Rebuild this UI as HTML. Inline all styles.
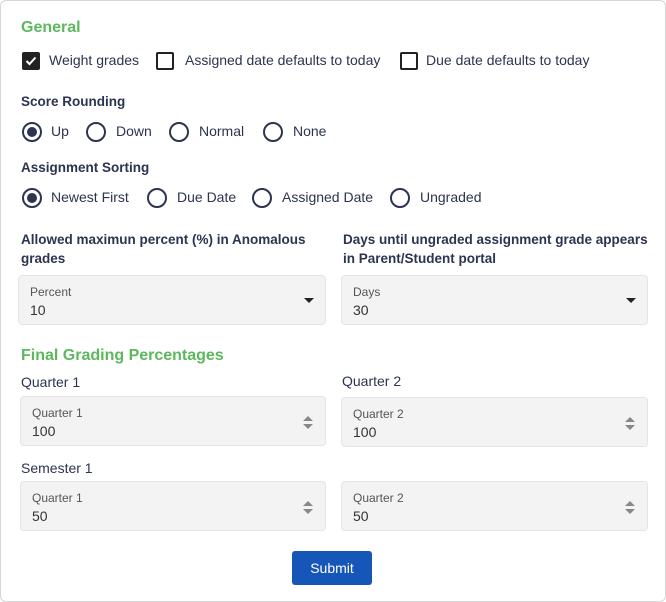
<!DOCTYPE html><html><head><style>
body{margin:0;width:666px;height:602px;background:#fff;font-family:"Liberation Sans",sans-serif;color:#2b3450;position:relative;overflow:hidden}
.card{position:absolute;left:0;top:0;width:664px;height:600px;border:1px solid #d6d6d6;border-radius:6px}
.a{position:absolute;white-space:nowrap}
.g{color:#5cb85c;font-weight:bold;font-size:16px}
.h{font-weight:bold;font-size:13.5px;line-height:19px}
.t{font-size:14px}
.cb{position:absolute;width:14px;height:14px;border:2px solid #222;border-radius:2px}
.rd{position:absolute;width:16px;height:16px;border:2px solid #2b3450;border-radius:50%}
.rd.on::after{content:"";position:absolute;left:3px;top:3px;width:10px;height:10px;border-radius:50%;background:#2b3450}
.box{position:absolute;background:#f3f3f3;border:1px solid #e4e4e4;border-radius:4px}
.lb{position:absolute;left:11px;top:9px;font-size:12px;color:#555}
.v{position:absolute;left:11px;top:26px;font-size:14px;color:#333}
.dd{position:absolute;right:11px;top:22px;width:0;height:0;border-left:5px solid transparent;border-right:5px solid transparent;border-top:5px solid #222}
.sp{position:absolute;right:12px;top:19px;width:0;height:0;border-left:5px solid transparent;border-right:5px solid transparent;border-bottom:5px solid #888}
.sp2{position:absolute;right:12px;top:27px;width:0;height:0;border-left:5px solid transparent;border-right:5px solid transparent;border-top:5px solid #888}
</style></head><body><div class="card"></div>
<div class="a g" style="left:21px;top:19px">General</div>
<div class="cb" style="left:22px;top:52px;background:#222"><svg width="14" height="14" viewBox="0 0 14 14" style="position:absolute;left:0;top:0"><path d="M2.5 7l3 3 6-6.5" stroke="#fff" stroke-width="2" fill="none"/></svg></div>
<div class="a t" style="left:49px;top:52px">Weight grades</div>
<div class="cb" style="left:156px;top:52px"></div>
<div class="a t" style="left:185px;top:52px">Assigned date defaults to today</div>
<div class="cb" style="left:400px;top:52px"></div>
<div class="a t" style="left:426px;top:52px">Due date defaults to today</div>
<div class="a h" style="left:21px;top:92px">Score Rounding</div>
<div class="rd on" style="left:22px;top:122px"></div><div class="a t" style="left:51px;top:123px">Up</div>
<div class="rd" style="left:86px;top:122px"></div><div class="a t" style="left:116px;top:123px">Down</div>
<div class="rd" style="left:169px;top:122px"></div><div class="a t" style="left:199px;top:123px">Normal</div>
<div class="rd" style="left:263px;top:122px"></div><div class="a t" style="left:293px;top:123px">None</div>
<div class="a h" style="left:21px;top:158px">Assignment Sorting</div>
<div class="rd on" style="left:22px;top:188px"></div><div class="a t" style="left:51px;top:189px">Newest First</div>
<div class="rd" style="left:147px;top:188px"></div><div class="a t" style="left:177px;top:189px">Due Date</div>
<div class="rd" style="left:252px;top:188px"></div><div class="a t" style="left:282px;top:189px">Assigned Date</div>
<div class="rd" style="left:390px;top:188px"></div><div class="a t" style="left:420px;top:189px">Ungraded</div>
<div class="a h" style="left:21px;top:230px">Allowed maximun percent (%) in Anomalous<br>grades</div>
<div class="a h" style="left:343px;top:230px">Days until ungraded assignment grade appears<br>in Parent/Student portal</div>
<div class="box" style="left:18px;top:275px;width:306px;height:48px"><span class="lb">Percent</span><span class="v">10</span><i class="dd"></i></div>
<div class="box" style="left:341px;top:275px;width:305px;height:48px"><span class="lb">Days</span><span class="v">30</span><i class="dd"></i></div>
<div class="a g" style="left:21px;top:347px">Final Grading Percentages</div>
<div class="a t" style="left:21px;top:374px">Quarter 1</div>
<div class="a t" style="left:342px;top:373px">Quarter 2</div>
<div class="box" style="left:20px;top:396px;width:304px;height:48px"><span class="lb">Quarter 1</span><span class="v">100</span><i class="sp"></i><i class="sp2"></i></div>
<div class="box" style="left:341px;top:397px;width:305px;height:48px"><span class="lb">Quarter 2</span><span class="v">100</span><i class="sp"></i><i class="sp2"></i></div>
<div class="a t" style="left:21px;top:460px">Semester 1</div>
<div class="box" style="left:20px;top:481px;width:304px;height:48px"><span class="lb">Quarter 1</span><span class="v">50</span><i class="sp"></i><i class="sp2"></i></div>
<div class="box" style="left:341px;top:481px;width:305px;height:48px"><span class="lb">Quarter 2</span><span class="v">50</span><i class="sp"></i><i class="sp2"></i></div>
<div class="a" style="left:292px;top:551px;width:80px;height:34px;background:#1556b8;border-radius:3px;color:#fff;font-size:14px;text-align:center;line-height:34px">Submit</div>
</body></html>
